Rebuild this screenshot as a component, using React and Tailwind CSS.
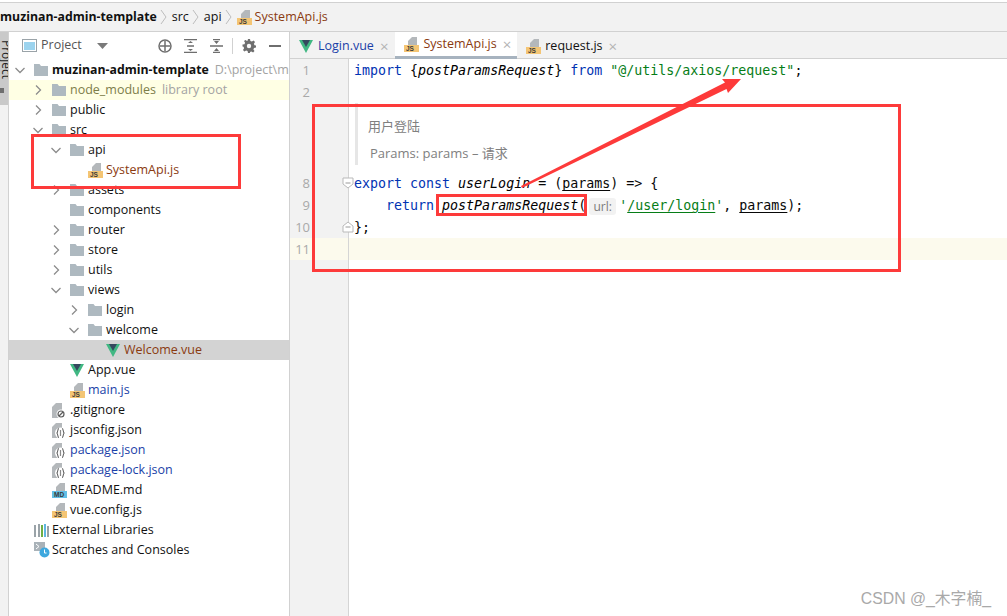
const ui = { fontFamily: '"Open Sans", "Noto Sans", "Noto Sans CJK SC", sans-serif' }

function Chevron({ open }) {
  return (
    <svg width="14" height="14" viewBox="0 0 14 14" fill="none" stroke="#8c8c8c" strokeWidth="1.3">
      {open ? <path d="M2.5 5l4.5 4.5L11.5 5" /> : <path d="M5 2.5L9.5 7 5 11.5" />}
    </svg>
  )
}

function Folder() {
  return (
    <svg width="14" height="12" viewBox="0 0 14 12" fill="#aeb9c0">
      <path d="M0 0h5.5l1.5 2h7v10H0z" />
    </svg>
  )
}

function Vue() {
  return (
    <svg width="14" height="13" viewBox="0 0 14 13">
      <path d="M0 0h14L7 13z" fill="#41b883" />
      <path d="M3 0h8L7 7z" fill="#35495e" />
    </svg>
  )
}

function FileBadge({ label, color }) {
  return (
    <svg width="15" height="15" viewBox="0 0 15 15">
      <path d="M8 0h5v8H4V4z" fill="#b4b8bb" />
      <rect x="0" y="8" width="15" height="7" fill={color} />
      <text x="2" y="14" fontSize="6.5" fontWeight="700" fill="#3a3a3a" fontFamily="Liberation Sans">{label}</text>
    </svg>
  )
}

function JsonFile() {
  return (
    <svg width="15" height="15" viewBox="0 0 15 15">
      <path d="M4 0h6v15H0V4z" fill="#b4b8bb" />
      <circle cx="8.500" cy="10" r="5.500" fill="#fff" />
      <path d="M7 5.500c-2 0-.5 4.500-2.500 4.500 2 0 .5 4.500 2.500 4.500M10 5.500c2 0 .5 4.500 2.500 4.500-2 0-.5 4.500-2.500 4.500" stroke="#5f5f5f" fill="none" strokeWidth="1.100" />
      <path d="M8.500 7v6" stroke="#8a8a8a" strokeWidth="1.200" />
    </svg>
  )
}

function IgnoreFile() {
  return (
    <svg width="15" height="15" viewBox="0 0 15 15">
      <path d="M4 0h6v15H0V4z" fill="#b4b8bb" />
      <circle cx="9" cy="11" r="4.500" fill="#fff" />
      <circle cx="9" cy="11" r="3" fill="none" stroke="#5c5c5c" strokeWidth="1.200" />
      <path d="M7 13l4-4" stroke="#5c5c5c" strokeWidth="1.200" />
    </svg>
  )
}

function Libraries() {
  return (
    <svg width="15" height="13" viewBox="0 0 15 13">
      <rect x="0" y="1" width="2" height="12" fill="#9aa3a8" />
      <rect x="4" y="0" width="2" height="13" fill="#9aa3a8" />
      <rect x="7" y="1" width="2" height="12" fill="#6fae45" />
      <rect x="10" y="0" width="2" height="13" fill="#5fb6e0" />
      <rect x="13" y="2" width="2" height="11" fill="#9aa3a8" />
    </svg>
  )
}

function Scratches() {
  return (
    <svg width="16" height="16" viewBox="0 0 16 16">
      <rect x="0" y="0" width="11" height="9" fill="#a9b2b8" />
      <path d="M2 2l3 2.500L2 7" stroke="#fff" fill="none" />
      <circle cx="10.500" cy="10.500" r="5" fill="#3ea8de" />
      <path d="M10.500 7.500v3.500h2" stroke="#fff" fill="none" />
    </svg>
  )
}

const icons = {
  folder: <Folder />,
  vue: <Vue />,
  js: <FileBadge label="JS" color="#f4c574" />,
  md: <FileBadge label="MD" color="#62bfe6" />,
  json: <JsonFile />,
  ignore: <IgnoreFile />,
  libs: <Libraries />,
  scratch: <Scratches />,
}

const tree = [
  { depth: 0, arrow: "open", icon: "folder", label: "muzinan-admin-template", bold: true, hint: "D:\\project\\muzinan-admin-template" },
  { depth: 1, arrow: "closed", icon: "folder", label: "node_modules", color: "text-[#7d7d4a]", hint: "library root", bg: "bg-[#ffffe4]" },
  { depth: 1, arrow: "closed", icon: "folder", label: "public" },
  { depth: 1, arrow: "open", icon: "folder", label: "src" },
  { depth: 2, arrow: "open", icon: "folder", label: "api" },
  { depth: 3, icon: "js", label: "SystemApi.js", color: "text-[#8a3a10]" },
  { depth: 2, arrow: "closed", icon: "folder", label: "assets" },
  { depth: 2, icon: "folder", label: "components" },
  { depth: 2, arrow: "closed", icon: "folder", label: "router" },
  { depth: 2, arrow: "closed", icon: "folder", label: "store" },
  { depth: 2, arrow: "closed", icon: "folder", label: "utils" },
  { depth: 2, arrow: "open", icon: "folder", label: "views" },
  { depth: 3, arrow: "closed", icon: "folder", label: "login" },
  { depth: 3, arrow: "open", icon: "folder", label: "welcome" },
  { depth: 4, icon: "vue", label: "Welcome.vue", color: "text-[#8a3a10]", bg: "bg-[#d3d3d3]" },
  { depth: 2, icon: "vue", label: "App.vue" },
  { depth: 2, icon: "js", label: "main.js", color: "text-[#1a3fa8]" },
  { depth: 1, icon: "ignore", label: ".gitignore" },
  { depth: 1, icon: "json", label: "jsconfig.json" },
  { depth: 1, icon: "json", label: "package.json", color: "text-[#1a3fa8]" },
  { depth: 1, icon: "json", label: "package-lock.json", color: "text-[#1a3fa8]" },
  { depth: 1, icon: "md", label: "README.md" },
  { depth: 1, icon: "js", label: "vue.config.js" },
  { depth: 0, icon: "libs", label: "External Libraries" },
  { depth: 0, icon: "scratch", label: "Scratches and Consoles" },
]

function TreeRow({ row }) {
  return (
    <div
      className={`flex items-center h-5 whitespace-nowrap overflow-hidden ${row.bg || ""}`}
      style={{ paddingLeft: 4 + row.depth * 18 }}
    >
      <span className="w-[21px] shrink-0 flex">
        {row.arrow && <Chevron open={row.arrow === "open"} />}
      </span>
      <span className="w-[18px] shrink-0 flex items-center">{icons[row.icon]}</span>
      <span className={`${row.color || "text-[#111]"} ${row.bold ? "font-bold text-[12.3px]" : ""}`}>{row.label}</span>
      {row.hint && <span className="ml-[6px] text-[#a3a3a3]">{row.hint}</span>}
    </div>
  )
}

function Toolbar() {
  return (
    <div className="h-[26px] flex items-center relative text-[#555] pt-px">
      <svg className="ml-[13px]" width="15" height="13" viewBox="0 0 15 13">
        <rect x="0.500" y="0.500" width="14" height="12" fill="#fff" stroke="#9aa3a8" />
        <rect x="2" y="3" width="11" height="8" fill="#9bd3ee" />
      </svg>
      <span className="ml-[4px]">Project</span>
      <svg className="ml-[15px]" width="11" height="6" viewBox="0 0 11 6"><path d="M0 0h11L5.500 6z" fill="#7a7a7a" /></svg>
      <svg className="ml-[50px]" width="14" height="14" viewBox="0 0 14 14" fill="none" stroke="#6e6e6e" strokeWidth="1.500">
        <circle cx="7" cy="7" r="6" />
        <path d="M7 2v10M2 7h10" />
      </svg>
      <svg className="ml-[12px]" width="13" height="14" viewBox="0 0 13 14" fill="none" stroke="#6e6e6e" strokeWidth="1.300">
        <path d="M0 .7h13M0 13.300h13M3 7h7" />
        <path d="M4 4l2.500-2L9 4M4 10l2.500 2L9 10" fill="#6e6e6e" stroke="none" />
      </svg>
      <svg className="ml-[13px]" width="13" height="14" viewBox="0 0 13 14" fill="none" stroke="#6e6e6e" strokeWidth="1.300">
        <path d="M0 7h13M3 .7h7M3 13.300h7" />
        <path d="M4 2l2.500 3L9 2M4 12l2.500-3L9 12" fill="#6e6e6e" stroke="none" />
      </svg>
      <span className="ml-[9px] w-px h-[16px] bg-[#d1d1d1]" />
      <svg className="ml-[9px]" width="14" height="14" viewBox="0 0 14 14">
        <path d="M6 0h2l.4 2 1.500.6L11.600 1.500 13 3l-1.100 1.700.6 1.500 1.500.3v2l-2 .4-.6 1.500 1.100 1.700-1.400 1.400-1.700-1.100-1.500.6L8 14H6l-.4-2-1.500-.6-1.700 1.100L1 11l1.100-1.700-.6-1.500L.5 7.500v-2l2-.3.6-1.500L2 2l1.400-1 1.700 1.100L5.600 1.500z" fill="#6e6e6e" />
        <circle cx="7" cy="7" r="2.200" fill="#f7f7f7" />
      </svg>
      <span className="ml-[13px] w-[12px] h-[2px] bg-[#6e6e6e]" />
    </div>
  )
}

function Tab({ icon, label, color, active }) {
  return (
    <div className={`h-[27px] flex items-center whitespace-nowrap pl-[9px] pt-px ${active ? "bg-white border-b-[3px] border-[#a7b3bf] pr-[6px]" : "pr-[7px]"}`}>
      <span className="w-[19px] flex items-center">{icons[icon]}</span>
      <span className={color}>{label}</span>
      <span className="ml-[6px] text-[#b4b4b4] text-[15px] leading-none">×</span>
    </div>
  )
}

function Line({ n, bg = "", fold, children }) {
  return (
    <div className={`flex h-[22px] items-center relative ${bg}`}>
      <div className={`w-[59px] h-full shrink-0 border-r border-[#d5d5d5] pr-[38px] pt-px flex items-center justify-end text-[#a9a9a9] text-[13px] ${bg || "bg-[#f2f2f2]"}`}>
        {n}
      </div>
      {fold && (
        <svg className="absolute left-[52px] top-[5px]" width="12" height="12" viewBox="0 0 12 12">
          <path d={fold === "down" ? "M1 1h10v6l-5 4-5-4z" : "M1 11h10V5L6 1 1 5z"} fill="#fff" stroke="#b9b9b9" />
          <path d="M3.500 6h5" stroke="#9a9a9a" />
        </svg>
      )}
      <pre className="pl-[5px] pt-[2px] text-[13.3px] text-[#080808] leading-none" style={{ fontFamily: '"DejaVu Sans Mono", monospace' }}>{children}</pre>
    </div>
  )
}

const Kw = ({ children }) => <span className="text-[#0033b3]">{children}</span>
const Str = ({ children }) => <span className="text-[#067d17]">{children}</span>
const It = ({ children }) => <span className="italic text-black">{children}</span>
const Und = ({ children }) => <span className="underline underline-offset-2">{children}</span>

function Editor() {
  return (
    <div className="flex-1 flex flex-col min-w-0">
      <div className="h-[27px] flex bg-[#f2f2f2] border-b border-[#d1d1d1] shrink-0 items-start">
        <Tab icon="vue" label="Login.vue" color="text-[#1a3fa8]" />
        <Tab icon="js" label="SystemApi.js" color="text-[#8a3a10]" active />
        <Tab icon="js" label="request.js" color="text-[#111]" />
      </div>
      <Line n="1"><Kw>import</Kw> {"{"}<It>postParamsRequest</It>{"}"} <Kw>from</Kw> <Str>"@/utils/axios/request"</Str>;</Line>
      <Line n="2" />
      <div className="flex h-[69px]">
        <div className="w-[59px] shrink-0 bg-[#f2f2f2] border-r border-[#d5d5d5]" />
        <div className="ml-[6px] mb-[7px] border-l-[3px] border-[#e6e6e6] pl-[10px] text-[#808080] text-[13px] leading-[18px]">
          <div className="pt-[14px]">用户登陆</div>
          <div className="pt-[9px] pl-[2px]">Params: params – 请求</div>
        </div>
      </div>
      <Line n="8" fold="down"><Kw>export const</Kw> <It>userLogin</It> = (<Und>params</Und>) =&gt; {"{"}</Line>
      <Line n="9">{"    "}<Kw>return</Kw> <It>postParamsRequest</It>(<span className="inline-block w-[27px] h-[17px] mx-[3px] -my-[4px] rounded-[3px] bg-[#f2f2f2] text-[#7a7a7a] text-[12px] text-center leading-[17px] align-middle" style={ui}>url:</span><Str>'<Und>/user/login</Und>'</Str>, <Und>params</Und>);</Line>
      <Line n="10" fold="up">{"};"}</Line>
      <Line n="11" bg="bg-[#fcfaed]" />
      <div className="flex-1 flex">
        <div className="w-[59px] bg-[#f2f2f2] border-r border-[#d5d5d5]" />
      </div>
    </div>
  )
}

function Annotations() {
  const box = "absolute border-[3px] border-[#fd3a3a] pointer-events-none"
  return (
    <>
      <div className={`${box} left-[31px] top-[134px] w-[210px] h-[55px]`} />
      <div className={`${box} left-[312px] top-[104px] w-[589px] h-[168px]`} />
      <div className={`${box} left-[436px] top-[194px] w-[151px] h-[22px]`} />
      <svg className="absolute left-0 top-0 pointer-events-none" width="1007" height="616" viewBox="0 0 1007 616">
        <path d="M521 186L725 82.500 722 79 741 79 728 93 726.500 89 522 188z" fill="#fd3a3a" />
      </svg>
    </>
  )
}

export default function App() {
  return (
    <div className="relative w-[1007px] h-[616px] overflow-hidden bg-white flex flex-col text-[12.5px]" style={ui}>
      <div className="h-[2px] bg-white shrink-0" />
      {/* breadcrumbs */}
      <div className="h-[30px] shrink-0 flex items-center bg-[#f2f2f2] border-y border-[#d1d1d1] whitespace-nowrap text-[#111]">
        <span className="font-bold text-[12.3px]">muzinan-admin-template</span>
        <Crumb />
        <span>src</span>
        <Crumb />
        <span>api</span>
        <Crumb />
        <span className="w-[18px] flex items-center">{icons.js}</span>
        <span className="text-[#8a3a10]">SystemApi.js</span>
      </div>
      <div className="flex-1 flex min-h-0">
        <div className="w-[9px] shrink-0 bg-[#f2f2f2] border-r border-[#d1d1d1]">
          <div className="h-[73px] bg-[#c9c9c9] relative overflow-hidden">
            <span className="absolute left-[-3px] top-[8px] text-[12px] text-[#222] [writing-mode:vertical-rl]">Project</span>
            <span className="absolute left-0 top-[56px] w-[4px] h-[5px] bg-[#6e6e6e]" />
          </div>
        </div>
        <div className="w-[281px] shrink-0 border-r border-[#d1d1d1] flex flex-col">
          <Toolbar />
          <div className="pt-[2px]">
            {tree.map(row => <TreeRow key={row.label} row={row} />)}
          </div>
        </div>
        <Editor />
      </div>
      <Annotations />
      <div className="absolute right-[16px] bottom-[7px] text-[15.8px] leading-5 text-[#a9a9a9]" style={{ fontFamily: '"Liberation Sans", "Noto Sans CJK SC", sans-serif' }}>CSDN @_木字楠_</div>
    </div>
  )
}

function Crumb() {
  return (
    <svg className="mx-[3.5px]" width="8" height="16" viewBox="0 0 8 16" fill="none" stroke="#bdbdbd">
      <path d="M1 1l5 7-5 7" />
    </svg>
  )
}
